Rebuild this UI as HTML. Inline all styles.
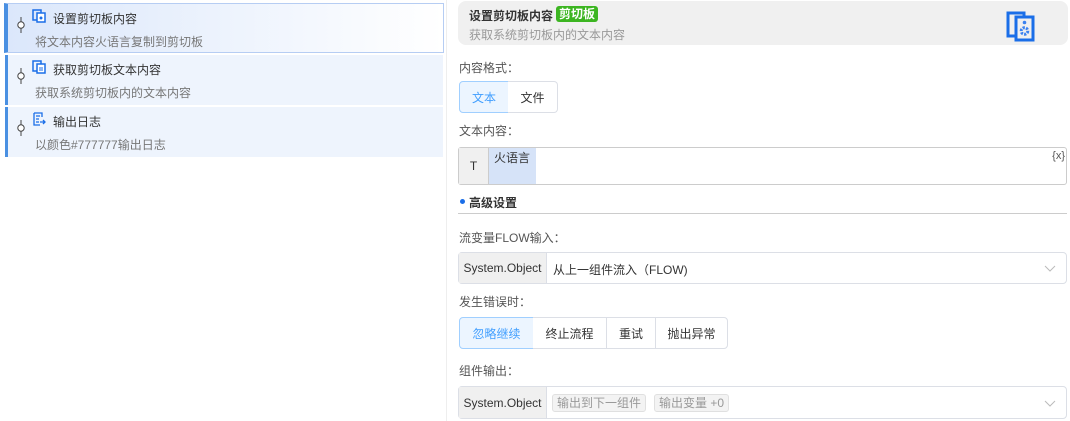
<!DOCTYPE html><html><head><meta charset="utf-8"><style>
*{box-sizing:border-box;margin:0;padding:0}
body{width:1070px;height:421px;background:#fff;font-family:"Liberation Sans","Noto Sans CJK SC",sans-serif;font-size:12px;color:#333;position:relative;overflow:hidden}
.a{position:absolute}
.item{position:absolute;left:5px;width:438px;height:50px;background:#eef4fd;border-left:3px solid #4a90e2}
.item .t{position:absolute;left:45px;top:6px;font-size:12px;color:#333}
.item .d{position:absolute;left:27px;top:29px;color:#777}
.item .pin{position:absolute;left:8px;top:13px}
.item .ic{position:absolute;left:24px;top:5px}
.lbl{position:absolute;left:459px;color:#555}
.btn{position:absolute;height:32px;border:1px solid #dcdfe6;display:flex;align-items:center;justify-content:center;color:#333;background:#fff}
.sel{position:absolute;left:458px;width:609px;border:1px solid #dcdfe6;border-radius:4px;background:#fff}
.pre{position:absolute;left:0;top:0;bottom:0;width:88px;background:#f0f0f0;border-right:1px solid #dcdfe6;display:flex;align-items:center;justify-content:center;color:#333}
.tag{position:absolute;top:7px;height:18px;border:1px solid #e0e0e0;background:#f3f3f3;border-radius:3px;color:#999;padding:0 4px;line-height:16px}
</style></head><body>
<div class="a" style="left:446px;top:0;width:1px;height:421px;background:#eee"></div>

<div class="item" style="top:3px;background:linear-gradient(90deg,#dbe7fb,#fff);border:1px solid #b6cdf3;border-left:4px solid #4a90e2;left:4px;width:440px">
<svg class="pin" width="10" height="16"><line x1="5" y1="0" x2="5" y2="16" stroke="#444"/><circle cx="5" cy="8" r="3.2" fill="#fff" stroke="#444"/></svg>
<svg class="ic" width="14" height="14"><rect x="1" y="1" width="8" height="10" fill="none" stroke="#1a6ee8" stroke-width="1.5"/><rect x="5" y="4" width="8" height="9" fill="#fff" stroke="#1a6ee8" stroke-width="1.5"/><circle cx="9" cy="9" r="1.5" fill="#1a6ee8"/></svg>
<div class="t">设置剪切板内容</div><div class="d">将文本内容火语言复制到剪切板</div></div>

<div class="item" style="top:55px">
<svg class="pin" width="10" height="16"><line x1="5" y1="0" x2="5" y2="16" stroke="#444"/><circle cx="5" cy="8" r="3.2" fill="#fff" stroke="#444"/></svg>
<svg class="ic" width="14" height="14"><rect x="1" y="1" width="8" height="10" fill="none" stroke="#1a6ee8" stroke-width="1.5"/><rect x="5" y="4" width="8" height="9" fill="#fff" stroke="#1a6ee8" stroke-width="1.5"/><line x1="7" y1="8" x2="11" y2="8" stroke="#1a6ee8"/><line x1="7" y1="10" x2="11" y2="10" stroke="#1a6ee8"/></svg>
<div class="t">获取剪切板文本内容</div><div class="d">获取系统剪切板内的文本内容</div></div>

<div class="item" style="top:107px">
<svg class="pin" width="10" height="16"><line x1="5" y1="0" x2="5" y2="16" stroke="#444"/><circle cx="5" cy="8" r="3.2" fill="#fff" stroke="#444"/></svg>
<svg class="ic" width="14" height="14"><path d="M2 1h8v4M2 1v12h6M4 4h4M4 7h3M4 10h3M8 10h5M11 8l2 2-2 2" fill="none" stroke="#1a6ee8" stroke-width="1.3"/></svg>
<div class="t">输出日志</div><div class="d">以颜色#777777输出日志</div></div>

<div class="a" style="left:458px;top:1px;width:610px;height:44px;background:#f0f0f0;border-radius:8px">
<div class="a" style="left:11px;top:6px;font-weight:bold;color:#333">设置剪切板内容</div>
<div class="a" style="left:98px;top:5px;background:#3cb521;color:#fff;border-radius:3px;padding:0 3px;height:16px;line-height:16px;font-weight:bold">剪切板</div>
<div class="a" style="left:11px;top:25px;color:#999">获取系统剪切板内的文本内容</div>
<svg class="a" style="left:548px;top:10px" width="32" height="32"><rect x="2" y="2" width="16" height="23" fill="none" stroke="#1a6ee8" stroke-width="3"/><rect x="10" y="6" width="17" height="23" fill="#f0f0f0" stroke="#1a6ee8" stroke-width="3"/><circle cx="18.5" cy="11.5" r="1.8" fill="#3b82f0"/><circle cx="18.5" cy="20" r="3.3" fill="none" stroke="#3b82f0" stroke-width="3" stroke-dasharray="2.2 1.2"/><circle cx="18.5" cy="20" r="1" fill="#f0f0f0"/></svg>
</div>

<div class="lbl" style="top:59px">内容格式：</div>
<div class="btn" style="left:459px;top:81px;width:50px;border-radius:4px 0 0 4px;background:#ecf5ff;border-color:#a0cfff;color:#409eff">文本</div>
<div class="btn" style="left:508px;top:81px;width:50px;border-radius:0 4px 4px 0;border-left:none">文件</div>

<div class="lbl" style="top:122px">文本内容：</div>
<div class="a" style="left:458px;top:147px;width:609px;height:38px;border:1px solid #ccc;border-radius:3px;background:#fff">
<div class="a" style="left:0;top:0;width:30px;height:36px;background:#f0f0f0;border-right:1px solid #ccc;display:flex;align-items:center;justify-content:center">T</div>
<div class="a" style="left:30px;top:0;width:47px;height:36px;background:#d6e3f8;padding:1px 0 0 5px">火语言</div>
<div class="a" style="right:1px;top:2px;font-size:11px;color:#555">{x}</div>
</div>
<div class="a" style="left:460px;top:199px;width:5px;height:5px;border-radius:50%;background:#1a6ee8"></div>
<div class="a" style="left:469px;top:194px;font-weight:bold;color:#333">高级设置</div>
<div class="a" style="left:458px;top:213px;width:609px;height:1px;background:#ccc"></div>

<div class="lbl" style="top:229px">流变量FLOW输入：</div>
<div class="sel" style="top:252px;height:32px"><div class="pre">System.Object</div>
<div class="a" style="left:94px;top:8px;color:#333">从上一组件流入（FLOW)</div>
<svg class="a" style="right:10px;top:12px" width="12" height="8"><path d="M1 1l5 5 5-5" fill="none" stroke="#bbb"/></svg></div>

<div class="lbl" style="top:293px">发生错误时：</div>
<div class="btn" style="left:459px;top:317px;width:75px;border-radius:4px 0 0 4px;background:#ecf5ff;border-color:#a0cfff;color:#409eff">忽略继续</div>
<div class="btn" style="left:533px;top:317px;width:74px;border-left:none">终止流程</div>
<div class="btn" style="left:606px;top:317px;width:50px">重试</div>
<div class="btn" style="left:655px;top:317px;width:73px;border-radius:0 4px 4px 0">抛出异常</div>

<div class="lbl" style="top:362px">组件输出：</div>
<div class="sel" style="top:386px;height:33px"><div class="pre">System.Object</div>
<div class="tag" style="left:93px">输出到下一组件</div>
<div class="tag" style="left:195px">输出变量 +0</div>
<svg class="a" style="right:10px;top:13px" width="12" height="8"><path d="M1 1l5 5 5-5" fill="none" stroke="#bbb"/></svg></div>
</body></html>
